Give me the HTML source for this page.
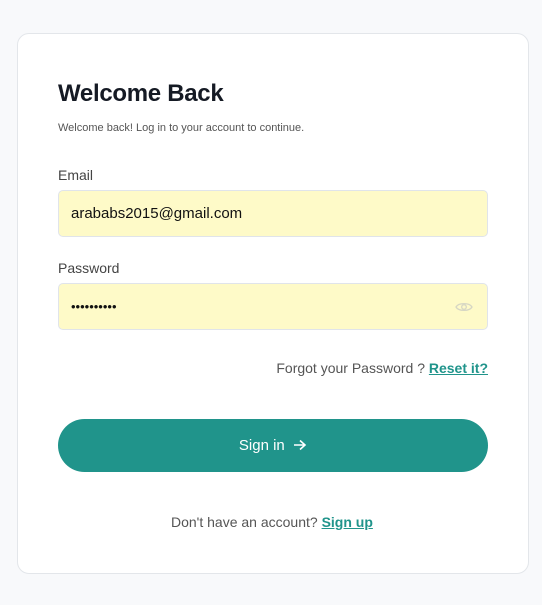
<!DOCTYPE html>
<html><head><style>
body{margin:0;background:#f8f9fb;font-family:"Liberation Sans",sans-serif;}
.card{position:absolute;left:17px;top:33px;width:510px;height:539px;background:#fff;border:1px solid #e3e6ea;border-radius:12px;}
.a{position:absolute;left:40px;}
h1{position:absolute;left:40px;top:46px;margin:0;font-size:24px;font-weight:bold;color:#151a24;letter-spacing:-0.3px;}
.sub{top:88px;font-size:11px;color:#555;}
.lbl{font-size:14px;color:#444;}
.in{position:absolute;left:40px;width:430px;height:47px;background:#fefac8;border:1px solid #e0e4ea;border-radius:5px;font-size:15px;color:#111;box-sizing:border-box;padding-left:12px;line-height:45px;}
.btn{position:absolute;left:40px;top:385px;width:430px;height:53px;border-radius:27px;background:#20948b;color:#fff;font-size:15px;text-align:center;line-height:53px;}
.t{position:absolute;font-size:14px;color:#555;}
.t b{color:#20948b;text-decoration:underline;}
</style></head><body>
<div class="card">
<h1>Welcome Back</h1>
<div class="a sub">Welcome back! Log in to your account to continue.</div>
<div class="a lbl" style="top:133px">Email</div>
<div class="in" style="top:156px">arababs2015@gmail.com</div>
<div class="a lbl" style="top:226px">Password</div>
<div class="in" style="top:249px;font-size:13px;letter-spacing:0px">••••••••••
<svg style="position:absolute;right:14px;top:16px" width="18" height="14" viewBox="0 0 18 14"><path d="M1 7C3.5 2.5 14.5 2.5 17 7C14.5 11.5 3.5 11.5 1 7Z" fill="none" stroke="#d6d6c4" stroke-width="1.3"/><circle cx="9" cy="7" r="2.3" fill="none" stroke="#d6d6c4" stroke-width="1.3"/></svg></div>
<div class="t" style="right:40px;top:326px">Forgot your Password ? <b>Reset it?</b></div>
<div class="btn">Sign in &nbsp;<svg width="14" height="12" viewBox="0 0 14 12" style="vertical-align:-1px"><path d="M1 6H12M7 1.5L12 6L7 10.5" fill="none" stroke="#fff" stroke-width="1.6"/></svg></div>
<div class="t" style="left:153px;top:480px">Don't have an account? <b>Sign up</b></div>
</div>
</body></html>
